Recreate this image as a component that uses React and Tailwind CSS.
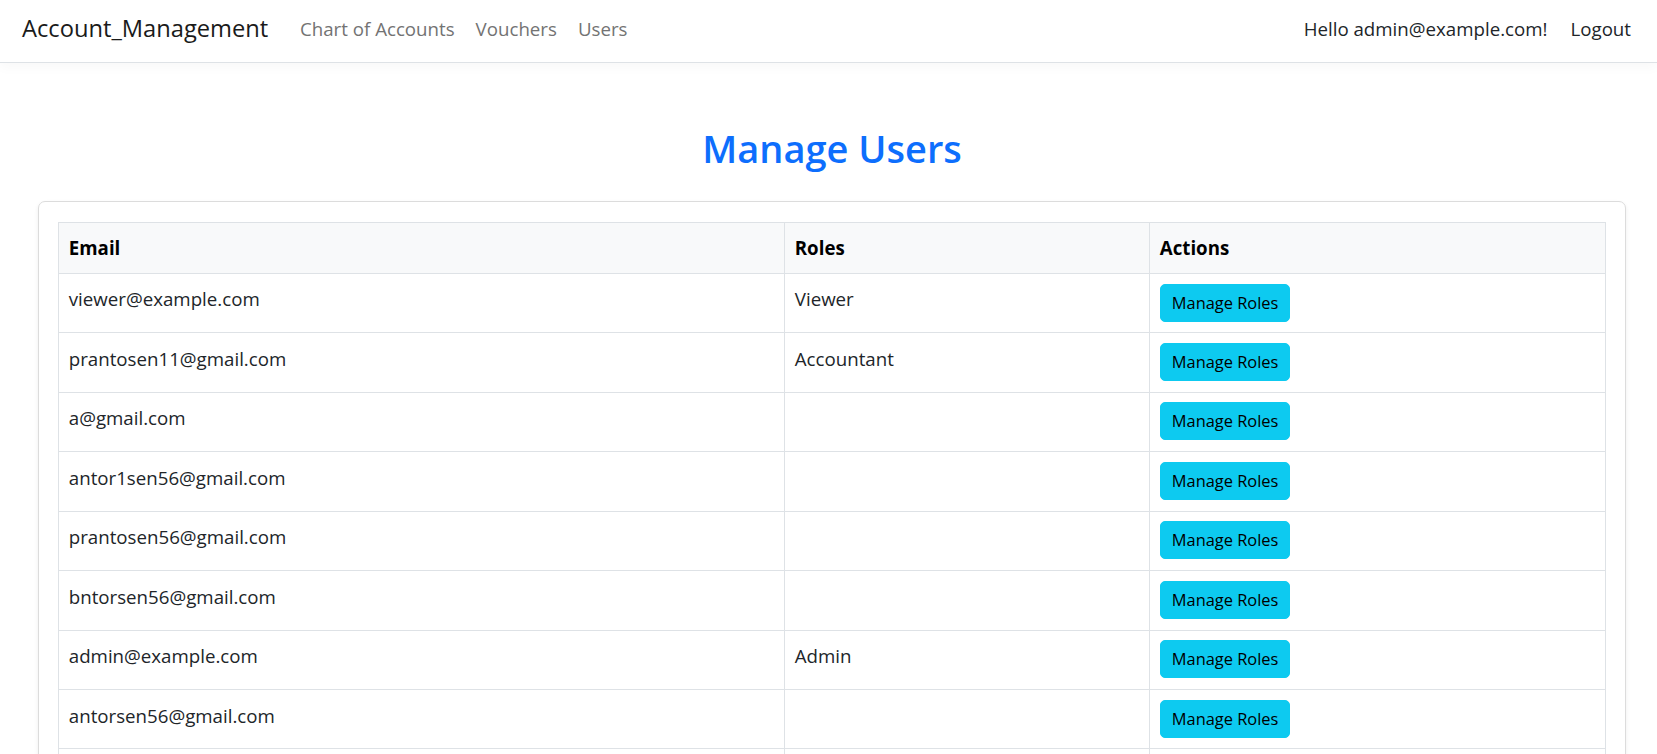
const rows = [
  ["viewer@example.com", "Viewer"],
  ["prantosen11@gmail.com", "Accountant"],
  ["a@gmail.com", ""],
  ["antor1sen56@gmail.com", ""],
  ["prantosen56@gmail.com", ""],
  ["bntorsen56@gmail.com", ""],
  ["admin@example.com", "Admin"],
  ["antorsen56@gmail.com", ""],
];

export default function App() {
  return (
    <div className="min-h-screen bg-white font-['Open_Sans',sans-serif] text-[#212529]">
      <nav className="relative z-10 flex h-[63px] items-center border-b border-[#dee2e6] bg-white pb-[7px] pl-[22px] pr-[26px] shadow-[0_4px_12px_rgba(0,0,0,0.03)]">
        <a className="w-[278px] shrink-0 text-[23.7px] leading-[36px] text-[#1a1a1a]">Account_Management</a>
        <div className="flex gap-[21px] pt-[4px] text-[18.7px] leading-[28.8px] text-[#737373]">
          <a>Chart of Accounts</a>
          <a>Vouchers</a>
          <a>Users</a>
        </div>
        <div className="ml-auto flex gap-[23px] pt-[3px] text-[18.7px] leading-[28.8px] text-[#212529]">
          <a>Hello admin@example.com!</a>
          <button className="leading-[28.8px]">Logout</button>
        </div>
      </nav>
      <main className="ml-[38px] mr-[31px]">
        <h2 className="mb-[30px] mt-[62px] text-center text-[38px] font-semibold leading-[46px] text-[#0d6efd]">
          Manage Users
        </h2>
        <div className="rounded-[7px] border border-[#dcdcdc] px-[19.2px] pb-[20px] pt-[20px] shadow-[0_2px_4px_rgba(0,0,0,0.075)]">
          <table className="w-full table-fixed border-collapse text-[18.7px] leading-[28.8px]">
            <colgroup>
              <col className="w-[726px]" />
              <col className="w-[365px]" />
              <col />
            </colgroup>
            <thead>
              <tr className="bg-[#f8f9fa]">
                <th className="border border-[#dee2e6] px-[9.6px] pb-[9.8px] pt-[11.4px] text-left font-bold text-black">Email</th>
                <th className="border border-[#dee2e6] px-[9.6px] pb-[9.8px] pt-[11.4px] text-left font-bold text-black">Roles</th>
                <th className="border border-[#dee2e6] px-[9.6px] pb-[9.8px] pt-[11.4px] text-left font-bold text-black">Actions</th>
              </tr>
            </thead>
            <tbody>
              {rows.map(([email, role]) => (
                <tr key={email}>
                  <td className="h-[59.45px] border border-[#dee2e6] px-[9.6px] pt-[11.5px] align-top">{email}</td>
                  <td className="h-[59.45px] border border-[#dee2e6] px-[9.6px] pt-[11.5px] align-top">{role}</td>
                  <td className="h-[59.45px] border border-[#dee2e6] px-[9.6px] pt-[9.6px] align-top">
                    <button className="block h-[38px] rounded-[5px] border border-[#0dcaf0] bg-[#0dcaf0] px-[11px] text-[16.4px] leading-[36px] text-black">
                      Manage Roles
                    </button>
                  </td>
                </tr>
              ))}
              <tr>
                <td className="h-[59.45px] border border-[#dee2e6]"></td>
                <td className="h-[59.45px] border border-[#dee2e6]"></td>
                <td className="h-[59.45px] border border-[#dee2e6]"></td>
              </tr>
            </tbody>
          </table>
        </div>
      </main>
    </div>
  );
}
